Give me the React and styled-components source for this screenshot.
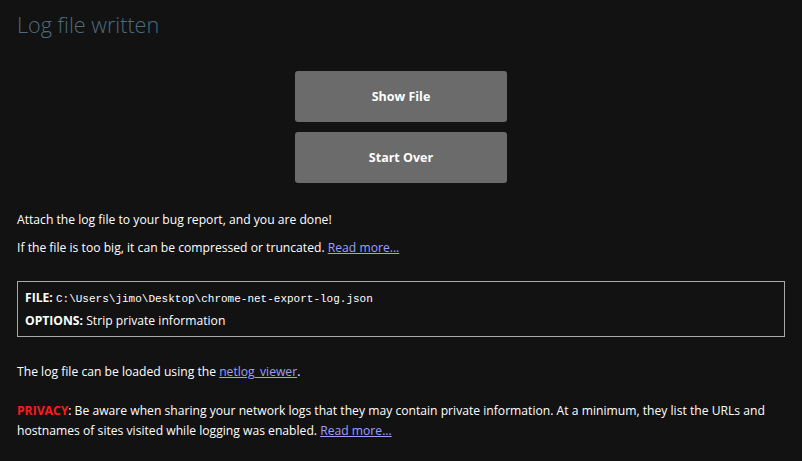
import React from "react";
import styled, { createGlobalStyle } from "styled-components";

const GlobalStyle = createGlobalStyle`
    html, body {
        margin: 0;
        padding: 0;
        background: #121212;
    }
    body {
        font-family: "Open Sans", "Noto Sans", sans-serif;
        font-size: 12.15px;
        color: #ffffff;
    }
`;

const Page = styled.div`
    width: 802px;
    height: 461px;
    box-sizing: border-box;
    padding: 0 17px;
    overflow: hidden;
    background: #121212;
`;

const Title = styled.h1`
    margin: 0;
    padding-top: 11px;
    height: 46px;
    box-sizing: border-box;
    font-size: 21.6px;
    font-weight: 300;
    color: #4f6a7d;
    line-height: 28px;
`;

const ButtonStack = styled.div`
    display: flex;
    flex-direction: column;
    align-items: center;
    gap: 10px;
    margin-top: 25px;
`;

const Button = styled.button`
    width: 212px;
    height: 51px;
    border: none;
    border-radius: 3px;
    background: #6b6b6b;
    color: #ffffff;
    font-family: "Open Sans", sans-serif;
    font-size: 12.5px;
    font-weight: 700;
    cursor: pointer;
`;

const Para = styled.p`
    margin: 0;
    margin-top: ${(p) => p.$top || 0}px;
    line-height: ${(p) => p.$lh || 18}px;
`;

const Link = styled.a`
    color: #9e9eff;
    text-decoration: underline;
`;

const FileBox = styled.div`
    margin-top: 24px;
    border: 1px solid #a9a9a9;
    padding: 7px 7px 6px;
    display: flex;
    flex-direction: column;
    gap: 4px;
`;

const Label = styled.b`
    font-weight: 700;
`;

const Mono = styled.span`
    font-family: "Liberation Mono", "DejaVu Sans Mono", monospace;
    font-size: 11px;
`;

const Alert = styled.b`
    color: #ff1a1a;
    font-weight: 700;
`;

export default function App() {
    return (
        <Page>
            <GlobalStyle />
            <Title>Log file written</Title>
            <ButtonStack>
                <Button>Show File</Button>
                <Button>Start Over</Button>
            </ButtonStack>
            <Para $top={28}>Attach the log file to your bug report, and you are done!</Para>
            <Para $top={10}>
                If the file is too big, it can be compressed or truncated. <Link href="#">Read more...</Link>
            </Para>
            <FileBox>
                <Para>
                    <Label>FILE:</Label> <Mono>C:\Users\jimo\Desktop\chrome-net-export-log.json</Mono>
                </Para>
                <Para>
                    <Label>OPTIONS:</Label> Strip private information
                </Para>
            </FileBox>
            <Para $top={26}>
                The log file can be loaded using the <Link href="#">netlog_viewer</Link>.
            </Para>
            <Para $top={20} $lh={20}>
                <Alert>PRIVACY</Alert>: Be aware when sharing your network logs that they may contain private information. At a minimum, they list the URLs and hostnames of sites visited while logging was enabled. <Link href="#">Read more...</Link>
            </Para>
        </Page>
    );
}
